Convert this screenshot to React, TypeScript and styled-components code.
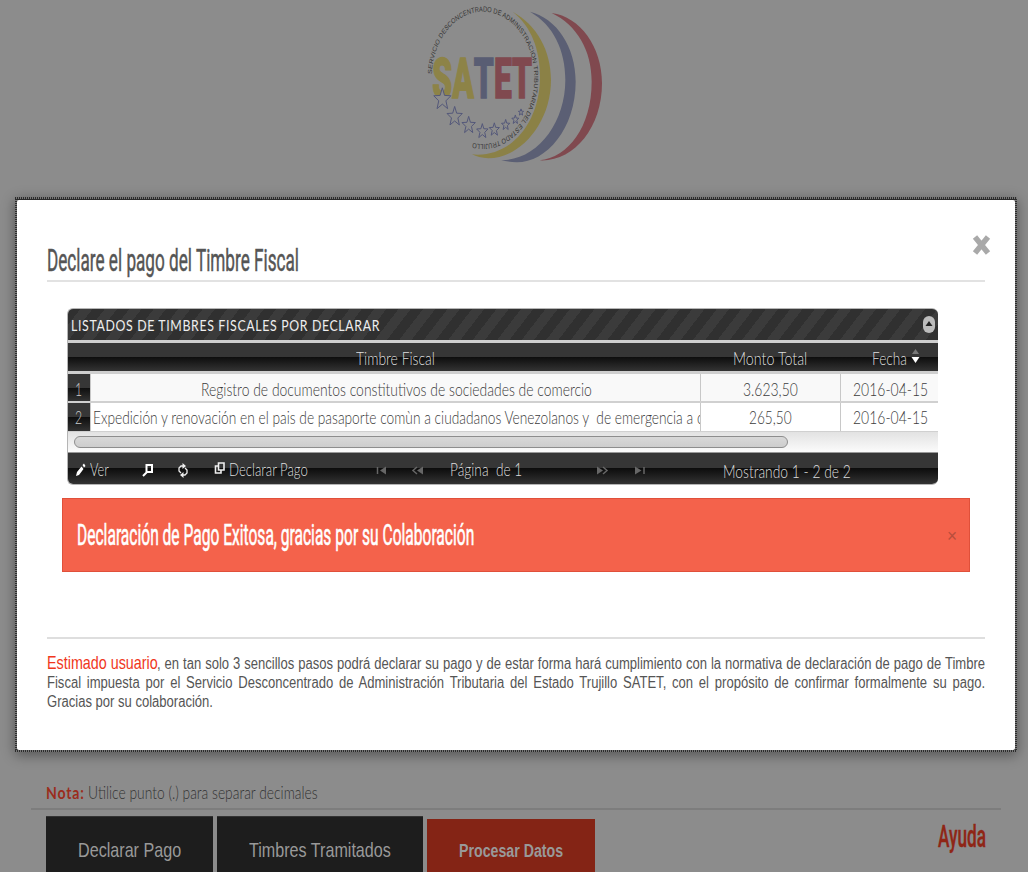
import React, { useLayoutEffect, useRef, useState } from "react";
import styled, { createGlobalStyle } from "styled-components";

const GlobalStyle = createGlobalStyle`
  * { box-sizing: border-box; }
  html, body { margin: 0; padding: 0; background: #8c8c8c; overflow: hidden; }
  body { font-family: "Liberation Sans", Arial, sans-serif; color: #555; }
`;

const LATO = '"Lato", sans-serif';
const ARIAL = '"Liberation Sans", Arial, sans-serif';
const OSWALD = '"Roboto", sans-serif';

type LabelProps = {
  $w: number;
  $size: number;
  $font?: string;
  $weight?: number;
  $color?: string;
  $line?: number;
  $top?: number;
  $left?: number;
  $spacing?: number;
  $stroke?: number;
};

const LabelBox = styled.span<LabelProps>`
  display: block;
  flex: none;
  width: ${(p) => p.$w}px;
  height: ${(p) => p.$line ?? 20}px;
  margin-top: ${(p) => p.$top ?? 0}px;
  margin-left: ${(p) => p.$left ?? 0}px;
  font-family: ${(p) => p.$font ?? LATO};
  font-size: ${(p) => p.$size}px;
  font-weight: ${(p) => p.$weight ?? 300};
  line-height: ${(p) => p.$line ?? 20}px;
  letter-spacing: ${(p) => p.$spacing ?? 0}px;
  color: ${(p) => p.$color ?? "#3c3c3c"};
  -webkit-text-stroke: ${(p) => p.$stroke ?? 0}px currentColor;
`;

const LabelText = styled.span`
  display: inline-block;
  white-space: pre;
  transform-origin: 0 50%;
`;

/* A condensed label: the text is squeezed to the width it is given. */
function Label({ children, ...box }: LabelProps & { children: string }) {
  const ref = useRef<HTMLSpanElement>(null);
  const [scale, setScale] = useState(1);
  useLayoutEffect(() => {
    if (ref.current) setScale(box.$w / ref.current.offsetWidth);
  }, [box.$w, children]);
  return (
    <LabelBox {...box}>
      <LabelText ref={ref} style={{ transform: `scaleX(${scale})` }}>{children}</LabelText>
    </LabelBox>
  );
}

const Page = styled.div`
  position: relative;
  width: 1028px;
  height: 872px;
  overflow: hidden;
  background: #8c8c8c;
  display: flex;
  flex-direction: column;
  justify-content: space-between;
`;

const Logo = styled.svg`
  display: block;
  width: 210px;
  height: 170px;
  margin-left: 410px;
`;

const Bottom = styled.footer`
  height: 90px;
  padding: 0 27px 0 31px;
`;

const Note = styled.div`
  display: flex;
  height: 28px;
  padding-left: 15px;
  border-bottom: 2px solid #7d7d7d;
`;

const Actions = styled.div`
  display: flex;
  gap: 4px;
  padding: 6px 15px 0;
`;

const Action = styled.button<{ $w: number; $primary?: boolean }>`
  display: flex;
  justify-content: center;
  width: ${(p) => p.$w}px;
  height: 80px;
  margin: ${(p) => (p.$primary ? 3 : 0)}px 0 0;
  padding: 0;
  border: 0;
  border-top: ${(p) => (p.$primary ? 0 : 1)}px solid #333;
  background: ${(p) => (p.$primary ? "#842415" : "#1d1d1d")};
`;

const Help = styled.a`
  margin-left: auto;
`;

const Modal = styled.section`
  position: absolute;
  left: 15px;
  top: 197px;
  width: 1002px;
  height: 555px;
  padding: 3px 2px 2px;
  background:
    repeating-linear-gradient(90deg, #2c2c2c 0 1px, #777 1px 2px) 0 0 / 100% 2px no-repeat,
    repeating-linear-gradient(90deg, #2c2c2c 0 1px, #777 1px 2px) 0 100% / 100% 2px no-repeat,
    repeating-linear-gradient(180deg, #2c2c2c 0 1px, #777 1px 2px);
  box-shadow: 0 3px 12px rgba(0, 0, 0, 0.4);
`;

const Sheet = styled.div`
  height: 100%;
  padding: 0 30px;
  background: #fff;
  border-radius: 2px;
`;

const Header = styled.header`
  display: flex;
  justify-content: space-between;
  height: 82px;
  border-bottom: 2px solid #e2e2e2;
`;

const CloseIcon = styled.svg`
  width: 20px;
  height: 24px;
  margin: 33px -7px 0 0;
`;

const Grid = styled.div`
  width: 871px;
  height: 177px;
  margin: 26px 0 0 20px;
  border: 1px solid #b5b5b5;
  border-width: 1px 0 1px 1px;
  border-radius: 6px;
  overflow: hidden;
`;

const Caption = styled.div`
  display: flex;
  justify-content: space-between;
  height: 31px;
  padding: 0 3px;
  background: repeating-linear-gradient(127.6deg, #303030 0 9.7px, #3b3b3b 9.7px 19.4px);
`;

const Collapse = styled.svg`
  width: 12px;
  height: 17px;
  margin-top: 7px;
`;

const glossy = "linear-gradient(#363636 0, #363636 50%, #0d0d0d 50%, #333 100%)";

const Columns = styled.div`
  display: grid;
  grid-template-columns: 22px 610px 140px 1fr;
`;

const HeadRow = styled(Columns)`
  height: 34px;
  border: solid #cfcfcf;
  border-width: 3px 0 3px;
  background: ${glossy} padding-box;
`;

const HeadCell = styled.div`
  display: flex;
  justify-content: center;
`;

const SortIcon = styled.svg`
  width: 9px;
  height: 15px;
  margin: 6px 0 0 4px;
`;

const Row = styled(Columns)<{ $alt?: boolean }>`
  height: 29px;
  background: ${(p) => (p.$alt ? "#fff" : "#f9f9f9")};
  border-bottom: ${(p) => (p.$alt ? 1 : 2)}px solid #d0d0d0;
`;

const Cell = styled.div<{ $start?: boolean }>`
  display: flex;
  justify-content: ${(p) => (p.$start ? "flex-start" : "center")};
  overflow: hidden;
  border-left: 1px solid #c8c8c8;
`;

const NumberCell = styled.div`
  display: flex;
  padding-left: 7px;
  background: ${glossy};
`;

const ScrollTrack = styled.div`
  height: 20px;
  padding: 4px 0 0 6px;
  background: linear-gradient(#e2e2e2, #fbfbfb);
`;

const ScrollThumb = styled.div`
  width: 714px;
  height: 12px;
  border: 1px solid #8d8d8d;
  border-radius: 6px;
  background: linear-gradient(#d8d8d8, #cdcdcd);
`;

const Pager = styled.div`
  display: flex;
  height: 32px;
  border-top: 1px solid #999;
  background: ${glossy};
`;

const Icon = styled.svg<{ $left: number; $top?: number; $w?: number }>`
  flex: none;
  width: ${(p) => p.$w ?? 12}px;
  height: 15px;
  margin: ${(p) => p.$top ?? 10}px 0 0 ${(p) => p.$left}px;
`;

const Alert = styled.div`
  display: flex;
  justify-content: space-between;
  width: 908px;
  height: 74px;
  margin: 13px 0 0 15px;
  padding: 0 12px 0 14px;
  border: 1px solid #e0503a;
  background: #f4624b;
`;

const Divider = styled.hr`
  height: 2px;
  margin: 65px 0 14px;
  border: 0;
  background: #dedede;
`;

const Message = styled.p`
  width: 1151px;
  margin: 0;
  font: 16px/19.5px ${ARIAL};
  color: #555;
  transform: scaleX(0.815);
  transform-origin: 0 0;
`;

const Line = styled.span<{ $last?: boolean }>`
  display: block;
  height: 19.5px;
  white-space: nowrap;
  text-align: justify;
  text-align-last: ${(p) => (p.$last ? "left" : "justify")};
`;

const Lead = styled.span`
  display: inline-block;
  width: 135px;
  font-size: 19px;
  text-align-last: left;
  color: #f0371c;
  transform: scaleX(0.925);
  transform-origin: 0 0;
`;

const star = (cx: number, cy: number, r: number) =>
  Array.from({ length: 10 }, (_, i) => {
    const a = (Math.PI / 5) * i - Math.PI / 2;
    const k = i % 2 ? r * 0.42 : r;
    return `${cx + k * Math.cos(a)},${cy + k * 1.28 * Math.sin(a)}`;
  }).join(" ");

const stars = [
  [97, 298, 27], [134, 350, 24], [176, 376, 21], [217, 394, 18],
  [253, 389, 16], [287, 375, 13], [316, 359, 11], [333, 337, 8],
];

function SatetLogo() {
  return (
    <Logo viewBox="0 0 630 510" preserveAspectRatio="none">
      <path fill="#8b8146" d="M308 35C380 75 423 150 423 240C423 370 330 475 235 475Q205 473 186 463C300 475 390 370 390 230C390 150 365 80 308 35Z" />
      <path fill="#5b5f74" d="M360 35C440 55 497 140 497 245C497 385 410 487 320 487Q290 486 274 480C380 482 466 370 466 240C466 150 430 75 360 35Z" />
      <path fill="#80494f" d="M425 39C510 50 576 140 576 250C576 385 490 487 388 481C475 472 545 380 545 245C545 150 500 75 425 39Z" />
      <text x="67" y="295" fontFamily="Roboto, sans-serif" fontWeight="900" fontSize="166" strokeWidth="4" textLength="299" lengthAdjust="spacingAndGlyphs">
        <tspan fill="#8d8347" stroke="#8d8347">SA</tspan>
        <tspan fill="#595d73" stroke="#595d73">T</tspan>
        <tspan fill="#80494f" stroke="#80494f">ET</tspan>
      </text>
      <g fill="#8c8c8c" stroke="#54587a" strokeWidth="3">
        {stars.map(([x, y, r]) => <polygon key={x} points={star(x, y, r)} />)}
      </g>
      <g transform="translate(219 234) scale(1 1.29)">
        <path id="ring" fill="none" d="M-154 -9A154 154 0 1 1 -45 147" />
        <text fontFamily="Liberation Sans, sans-serif" fontSize="17" fill="#333">
          <textPath href="#ring" textLength="748" lengthAdjust="spacing">SERVICIO DESCONCENTRADO DE ADMINISTRACION TRIBUTARIA DEL ESTADO TRUJILLO</textPath>
        </text>
      </g>
    </Logo>
  );
}

const timbres = [
  { name: "Registro de documentos constitutivos de sociedades de comercio", w: 391, amount: "3.623,50", aw: 55, date: "2016-04-15" },
  { name: "Expedición y renovación en el pais de pasaporte comùn a ciudadanos Venezolanos y  de emergencia a c", w: 610, amount: "265,50", aw: 43, date: "2016-04-15" },
];

export default function App() {
  return (
    <>
      <GlobalStyle />
      <Page>
        <SatetLogo />
        <Bottom>
          <Note>
            <Label $w={39} $size={17} $weight={700} $color="#9b2c1c" $spacing={1} $top={1}>Nota:</Label>
            <Label $w={230} $size={17.5} $color="#333" $left={3} $top={1}>Utilice punto (.) para separar decimales</Label>
          </Note>
          <Actions>
            <Action $w={167}><Label $w={103} $size={21} $font={ARIAL} $weight={400} $color="#999" $top={23}>Declarar Pago</Label></Action>
            <Action $w={206}><Label $w={142} $size={21} $font={ARIAL} $weight={400} $color="#999" $top={23}>Timbres Tramitados</Label></Action>
            <Action $w={168} $primary><Label $w={104} $size={18} $font={ARIAL} $weight={700} $color="#999" $top={22}>Procesar Datos</Label></Action>
            <Help><Label $w={48} $size={32} $font={OSWALD} $weight={500} $stroke={0.4} $color="#8f2616" $top={10}>Ayuda</Label></Help>
          </Actions>
        </Bottom>
        <Modal>
          <Sheet>
            <Header>
              <Label $w={252} $size={32} $font={OSWALD} $weight={400} $stroke={0.5} $color="#555" $top={50}>Declare el pago del Timbre Fiscal</Label>
              <CloseIcon viewBox="0 0 20 24"><path d="M3 4L16 20M16 4L3 20" stroke="#a9a9a9" strokeWidth="5.5" /></CloseIcon>
            </Header>
            <Grid>
              <Caption>
                <Label $w={309} $size={15.5} $weight={400} $color="#eee" $spacing={0.8} $top={6}>LISTADOS DE TIMBRES FISCALES POR DECLARAR</Label>
                <Collapse viewBox="0 0 12 17"><rect width="12" height="17" rx="6" fill="#bcbcbc" /><path d="M2.500 10L6 5L9.500 10Z" fill="#222" /></Collapse>
              </Caption>
              <HeadRow>
                <HeadCell />
                <HeadCell><Label $w={79} $size={18} $color="#ddd" $top={5}>Timbre Fiscal</Label></HeadCell>
                <HeadCell><Label $w={74} $size={18} $color="#ddd" $top={5}>Monto Total</Label></HeadCell>
                <HeadCell>
                  <Label $w={35} $size={18} $color="#ddd" $top={5} $left={13}>Fecha</Label>
                  <SortIcon viewBox="0 0 9 15"><path d="M1 5L4.500 0L8 5Z" fill="#777" /><path d="M0.500 8H8.500L4.500 14Z" fill="#fff" /></SortIcon>
                </HeadCell>
              </HeadRow>
              {timbres.map((t, i) => (
                <Row key={t.name} $alt={i === 1}>
                  <NumberCell><Label $w={7} $size={17.5} $color="#ccc" $top={6 - i}>{String(i + 1)}</Label></NumberCell>
                  <Cell $start={i === 1}><Label $w={t.w} $size={17.5} $left={i === 1 ? 2 : 1} $top={6 - i}>{t.name}</Label></Cell>
                  <Cell><Label $w={t.aw} $size={17.5} $top={6 - i}>{t.amount}</Label></Cell>
                  <Cell><Label $w={75} $size={17.5} $left={1} $top={6 - i}>{t.date}</Label></Cell>
                </Row>
              ))}
              <ScrollTrack><ScrollThumb /></ScrollTrack>
              <Pager>
                <Icon $left={7} viewBox="0 0 12 15"><path d="M1 13L2 9L6.500 3.500L8.500 6L4 12ZM7.500 2L9 0.500L10.500 3L9 4.500Z" fill="#fff" /></Icon>
                <Label $w={19} $size={17.5} $color="#ddd" $left={3} $top={7}>Ver</Label>
                <Icon $left={33} viewBox="0 0 12 15"><path d="M4.500 2H10V9H4.500ZM5 9L1 13" fill="none" stroke="#fff" strokeWidth="2" /></Icon>
                <Icon $left={23} viewBox="0 0 12 15"><path d="M6 3H4L2 5V8L4 10M6 12H8L10 10V7L8 5" fill="none" stroke="#eee" strokeWidth="1.300" /><path d="M5.500 0L9 3L5.500 6ZM6.500 9L3 12L6.500 15Z" fill="#eee" /></Icon>
                <Icon $left={25} $top={8} viewBox="0 0 12 15"><path d="M4.500 2H10V9H4.500ZM4 5H1.500V12H7V9" fill="none" stroke="#eee" strokeWidth="1.600" /></Icon>
                <Label $w={79} $size={18} $color="#ddd" $left={3} $top={6}>Declarar Pago</Label>
                <Icon $left={68} viewBox="0 0 12 15"><path d="M1.500 4V11" stroke="#666" strokeWidth="1.500" /><path d="M10 3.500V11.500L4 7.500Z" fill="#666" /></Icon>
                <Icon $left={23} $w={13} viewBox="0 0 13 15"><path d="M6 4L2 7.500L6 11" fill="none" stroke="#666" strokeWidth="1.500" /><path d="M12 3.500V11.500L6 7.500Z" fill="#666" /></Icon>
                <Label $w={72} $size={17.5} $color="#ddd" $left={26} $top={7}>{"Página  de 1"}</Label>
                <Icon $left={74} $w={13} viewBox="0 0 13 15"><path d="M7 4L11 7.500L7 11" fill="none" stroke="#666" strokeWidth="1.500" /><path d="M1 3.500V11.500L7 7.500Z" fill="#666" /></Icon>
                <Icon $left={25} viewBox="0 0 12 15"><path d="M10 4V11" stroke="#666" strokeWidth="1.500" /><path d="M1 3.500V11.500L7.500 7.500Z" fill="#666" /></Icon>
                <Label $w={128} $size={17.5} $color="#ddd" $left={77} $top={9}>Mostrando 1 - 2 de 2</Label>
              </Pager>
            </Grid>
            <Alert>
              <Label $w={397} $size={30} $font={OSWALD} $weight={400} $stroke={0.6} $color="#fff" $top={26}>Declaración de Pago Exitosa, gracias por su Colaboración</Label>
              <Label $w={10} $size={19} $font={ARIAL} $weight={400} $color="#b84e3c" $top={27}>×</Label>
            </Alert>
            <Divider />
            <Message>
              <Line><Lead>Estimado usuario</Lead>, en tan solo 3 sencillos pasos podrá declarar su pago y de estar forma hará cumplimiento con la normativa de declaración de pago de Timbre</Line>
              <Line>Fiscal impuesta por el Servicio Desconcentrado de Administración Tributaria del Estado Trujillo SATET, con el propósito de confirmar formalmente su pago.</Line>
              <Line $last>Gracias por su colaboración.</Line>
            </Message>
          </Sheet>
        </Modal>
      </Page>
    </>
  );
}
